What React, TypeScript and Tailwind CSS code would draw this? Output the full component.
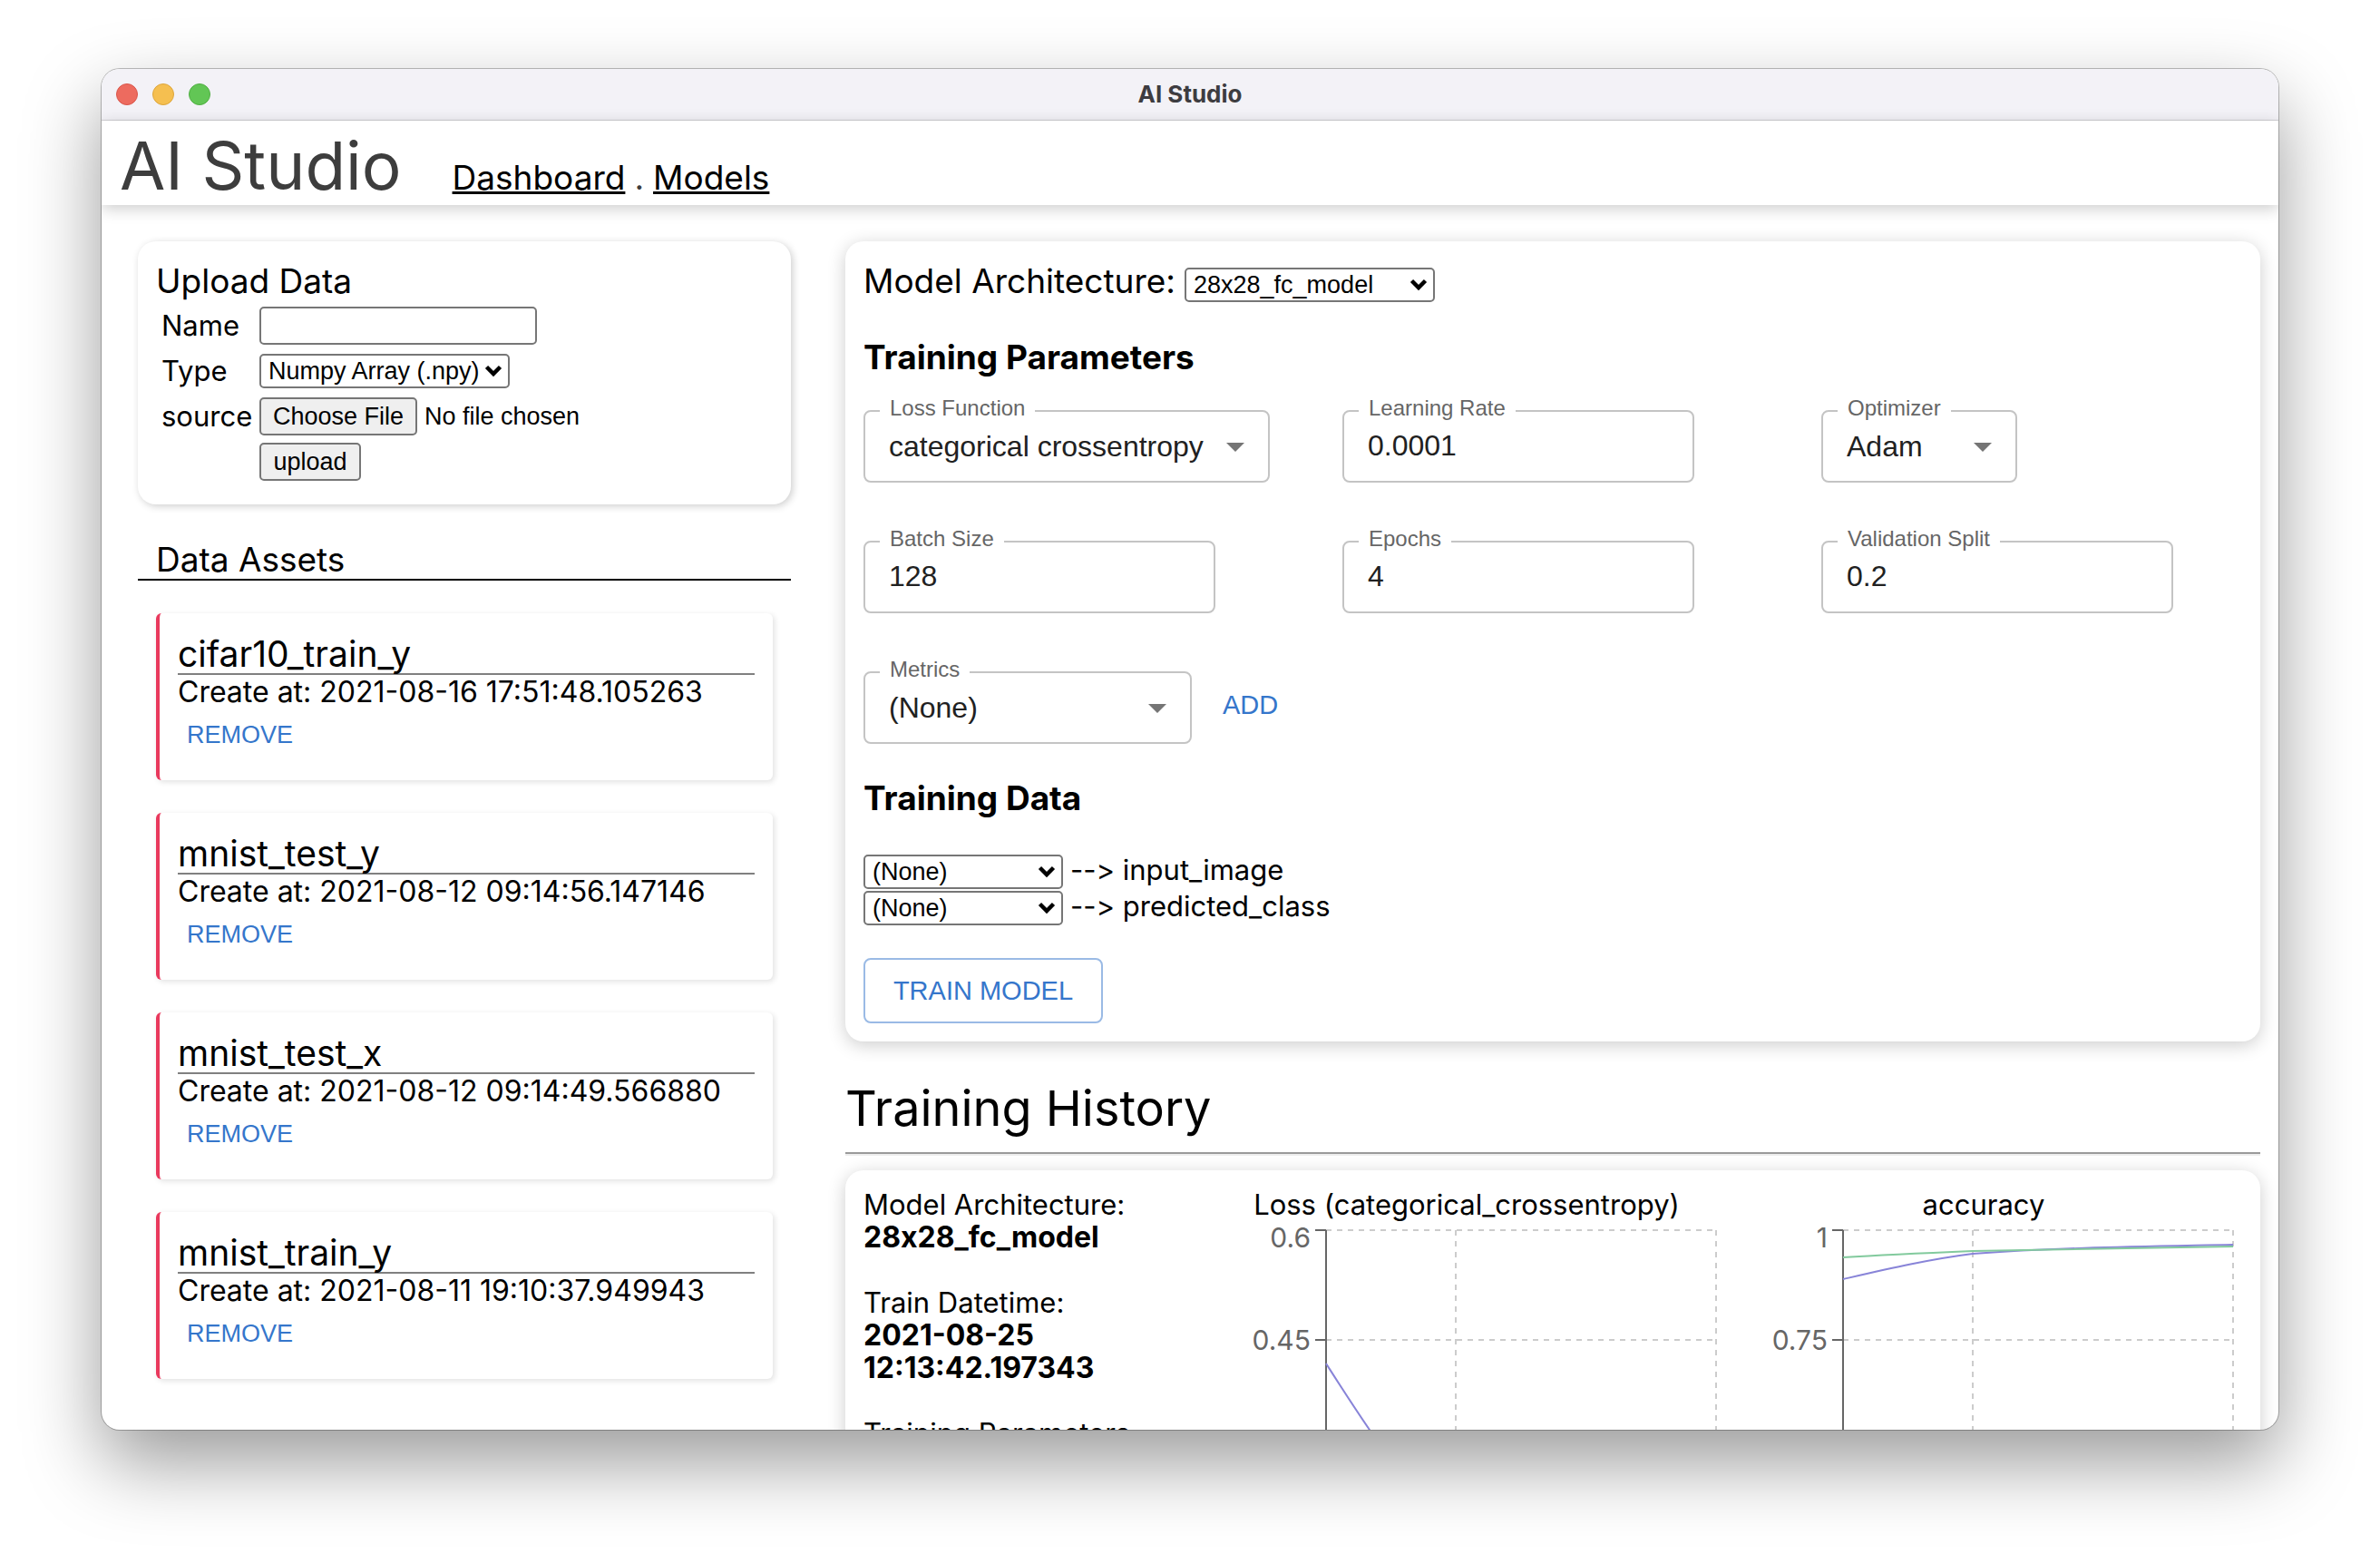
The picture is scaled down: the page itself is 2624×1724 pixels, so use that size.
import React from "react";

type Option = { id: string; label: string; value: string };

const assets = [
  { name: "cifar10_train_y", created: "2021-08-16 17:51:48.105263" },
  { name: "mnist_test_y", created: "2021-08-12 09:14:56.147146" },
  { name: "mnist_test_x", created: "2021-08-12 09:14:49.566880" },
  { name: "mnist_train_y", created: "2021-08-11 19:10:37.949943" },
];

const targets = ["input_image", "predicted_class"];

function PlainSelect({ id, value, className }: { id: string; value: string; className?: string }) {
  return (
    <span className={"relative inline-flex h-[38px] " + (className ?? "")}>
      <select
        id={id}
        defaultValue={value}
        className="h-full w-full appearance-none rounded-[5px] border-2 border-[#767676] bg-white pl-2 pr-8 font-['Liberation_Sans',sans-serif] text-[27px] leading-8 text-black"
      >
        <option>{value}</option>
      </select>
      <svg viewBox="0 0 20 14" className="pointer-events-none absolute right-2 top-3 h-3.5 w-5" aria-hidden="true">
        <path d="M2.5 2.5 L10 10 L17.5 2.5" fill="none" stroke="#000" strokeWidth="4.5" />
      </svg>
    </span>
  );
}

function Outlined({ id, label, children, className }: { id: string; label: string; children: React.ReactNode; className?: string }) {
  return (
    <fieldset
      className={
        "relative h-[94px] rounded-lg border-2 border-[#c4c4c4] pl-4 pr-3 font-['Liberation_Sans',sans-serif] " + (className ?? "")
      }
    >
      <legend className="px-[11px] pb-1.5 text-2xl leading-6 text-[#666666]">
        <label htmlFor={id}>{label}</label>
      </legend>
      {children}
    </fieldset>
  );
}

function OutlinedInput({ id, label, value }: Option) {
  return (
    <Outlined id={id} label={label} className="w-[388px]">
      <input
        id={id}
        defaultValue={value}
        className="block h-[46px] w-full bg-transparent pl-2.5 text-[32px] text-[#212121] outline-none"
      />
    </Outlined>
  );
}

function OutlinedSelect({ id, label, value, className }: Option & { className: string }) {
  return (
    <Outlined id={id} label={label} className={className}>
      <select
        id={id}
        defaultValue={value}
        className="block h-[46px] w-full appearance-none bg-transparent pl-2.5 text-[32px] text-[#212121] outline-none"
      >
        <option>{value}</option>
      </select>
      <svg viewBox="0 0 20 10" className="pointer-events-none absolute bottom-8 right-[26px] h-2.5 w-5" aria-hidden="true">
        <path d="M0 0 H20 L10 10 Z" fill="#757575" />
      </svg>
    </Outlined>
  );
}

type ChartProps = { title: string; ticks: [string, string]; blue: string; green?: string };

function Chart({ title, ticks, blue, green }: ChartProps) {
  return (
    <figure>
      <figcaption className="text-center text-[31px] leading-9">{title}</figcaption>
      <svg viewBox="0 0 570 400" className="block w-full font-['Inter',sans-serif]" role="img" aria-label={title}>
        <g stroke="#ccc" strokeWidth="2" strokeDasharray="6 6">
          <path d="M130 10 H560" />
          <path d="M130 131 H560" />
          <path d="M130 252 H560" />
          <path d="M273 10 V400" />
          <path d="M560 10 V400" />
        </g>
        <path d="M130 10 V400 M118 10 H130 M118 131 H130" fill="none" stroke="#666" strokeWidth="2" />
        <g fill="#666" fontSize="30" textAnchor="end">
          <text x="113" y="29">{ticks[0]}</text>
          <text x="113" y="142">{ticks[1]}</text>
        </g>
        <path d={blue} fill="none" stroke="#8884d8" strokeWidth="2" />
        {green && <path d={green} fill="none" stroke="#82ca9d" strokeWidth="2" />}
      </svg>
    </figure>
  );
}

export default function App() {
  return (
    <div className="flex h-screen flex-col overflow-hidden bg-white px-28 pb-[148px] pt-[76px] font-['Inter',sans-serif] text-black">
      <div className="flex min-h-0 flex-1 flex-col overflow-hidden rounded-[20px] bg-white shadow-[0_0_0_1px_rgba(0,0,0,0.25),0_36px_84px_rgba(0,0,0,0.4)]">
        <div className="grid h-[57px] shrink-0 grid-cols-[1fr_auto_1fr] items-center border-b border-[#d2d1d5] bg-[#f3f2f7] px-4">
          <div className="flex gap-4">
            <span className="size-6 rounded-full border border-[#d9564b] bg-[#ed6b5f]" />
            <span className="size-6 rounded-full border border-[#dca53c] bg-[#f5bf50]" />
            <span className="size-6 rounded-full border border-[#50ae42] bg-[#62c655]" />
          </div>
          <span className="text-[26px] font-bold leading-8 text-[#3d3c40]">AI Studio</span>
        </div>

        <header className="relative flex h-[93px] shrink-0 items-baseline gap-14 px-5 text-[#3d3d3d] shadow-[0_4px_16px_rgba(0,0,0,0.2)]">
          <h1 className="text-[73px] leading-[100px]">AI Studio</h1>
          <nav className="flex gap-2.5 text-[37px]">
            <a href="#dashboard" className="text-black underline">Dashboard</a>
            <span>.</span>
            <a href="#models" className="text-black underline">Models</a>
          </nav>
        </header>

        <main className="grid min-h-0 flex-1 grid-cols-[6fr_13fr] items-start gap-[60px] overflow-hidden pl-10 pr-5 pt-10">
          <div className="min-w-0">
            <section className="rounded-[20px] px-5 pb-[26px] pt-5 shadow-[2px_2px_8px_rgba(0,0,0,0.2)]">
              <h2 className="text-[37px] leading-[48px]">Upload Data</h2>
              <form className="mt-1 grid auto-rows-[42px] grid-cols-[108px_1fr] items-center gap-y-2 pl-1.5 text-[31px]">
                <label htmlFor="name">Name</label>
                <input id="name" className="h-[42px] w-[306px] rounded-[5px] border-2 border-[#767676] bg-white px-2 text-[27px]" />
                <label htmlFor="type">Type</label>
                <PlainSelect id="type" value="Numpy Array (.npy)" className="w-[276px]" />
                <label htmlFor="source">source</label>
                <input
                  id="source"
                  type="file"
                  className="font-['Liberation_Sans',sans-serif] text-[27px] leading-8 file:mr-2 file:h-[42px] file:w-[174px] file:rounded-[5px] file:border-2 file:border-solid file:border-[#767676] file:bg-[#efefef]"
                />
                <button
                  type="button"
                  className="col-start-2 h-[42px] w-28 rounded-[5px] border-2 border-[#767676] bg-[#efefef] font-['Liberation_Sans',sans-serif] text-[27px] leading-8"
                >
                  upload
                </button>
              </form>
            </section>

            <h2 className="mt-10 border-b-2 border-black px-5 text-[37px] leading-[42px]">Data Assets</h2>
            <div className="mx-5 mt-9 flex flex-col gap-9">
              {assets.map((a) => (
                <article key={a.name} className="rounded-md border-l-4 border-[#e9395d] px-5 pb-[22px] pt-6 shadow-[2px_2px_6px_rgba(0,0,0,0.12)]">
                  <h3 className="border-b-2 border-[#808080] text-[39px] leading-[42px]">{a.name}</h3>
                  <p className="text-[32px] leading-[38px]">Create at: {a.created}</p>
                  <button type="button" className="h-14 px-2.5 font-['Liberation_Sans',sans-serif] text-[27px] leading-8 text-[#3576cb]">
                    REMOVE
                  </button>
                </article>
              ))}
            </div>
          </div>

          <div className="min-w-0">
            <section className="rounded-[20px] p-5 shadow-[0_4px_20px_rgba(0,0,0,0.2)]">
              <div className="flex items-center gap-2.5">
                <label htmlFor="arch" className="text-[37px] leading-[48px]">Model Architecture:</label>
                <PlainSelect id="arch" value="28x28_fc_model" className="mt-2 w-[276px]" />
              </div>
              <h3 className="mt-9 text-[37px] font-bold leading-[48px]">Training Parameters</h3>
              <div className="mt-5 grid grid-cols-3 gap-x-16 gap-y-[50px]">
                <OutlinedSelect id="loss" label="Loss Function" value="categorical crossentropy" className="w-[448px]" />
                <OutlinedInput id="rate" label="Learning Rate" value="0.0001" />
                <OutlinedSelect id="optimizer" label="Optimizer" value="Adam" className="w-[216px]" />
                <OutlinedInput id="batch" label="Batch Size" value="128" />
                <OutlinedInput id="epochs" label="Epochs" value="4" />
                <OutlinedInput id="split" label="Validation Split" value="0.2" />
                <div className="flex items-center gap-[34px]">
                  <OutlinedSelect id="metrics" label="Metrics" value="(None)" className="w-[362px]" />
                  <button type="button" className="pt-2 font-['Liberation_Sans',sans-serif] text-[29px] leading-8 text-[#3576cb]">ADD</button>
                </div>
              </div>
              <h3 className="mt-9 text-[37px] font-bold leading-[48px]">Training Data</h3>
              <div className="mt-[38px] flex flex-col gap-0.5">
                {targets.map((t) => (
                  <div key={t} className="flex items-start gap-2">
                    <PlainSelect id={t} value="(None)" className="w-[220px]" />
                    <label htmlFor={t} className="text-[31px] leading-[34px] [font-variant-ligatures:none]">{"--> " + t}</label>
                  </div>
                ))}
              </div>
              <button
                type="button"
                className="mt-9 block h-[72px] w-[264px] rounded-lg border-2 border-[#9abae5] font-['Liberation_Sans',sans-serif] text-[29px] leading-8 text-[#3576cb]"
              >
                TRAIN MODEL
              </button>
            </section>

            <h2 className="mt-[38px] pb-3 text-[54px] leading-[72px]">Training History</h2>
            <hr className="h-1 border-b-2 border-t-2 border-b-[#eeeeee] border-t-[#9a9a9a]" />

            <section className="mt-4 grid grid-cols-[25%_minmax(0,1fr)_minmax(0,1fr)] rounded-[20px] p-5 shadow-[0_4px_20px_rgba(0,0,0,0.2)]">
              <dl className="pr-20 text-[31px] leading-9">
                <dt>Model Architecture:</dt>
                <dd className="mb-9 text-[32px] font-bold leading-9 [font-variant-ligatures:none]">28x28_fc_model</dd>
                <dt>Train Datetime:</dt>
                <dd className="mb-9 text-[32px] font-bold leading-9">2021-08-25 12:13:42.197343</dd>
                <dt>Training Parameters</dt>
              </dl>
              <Chart
                title="Loss (categorical_crossentropy)"
                ticks={["0.6", "0.45"]}
                blue="M130 157 C178 232 225 307 273 330 C368 360 464 370 560 378"
              />
              <Chart
                title="accuracy"
                ticks={["1", "0.75"]}
                blue="M130 64 C178 53 225 42 273 36 C368 29 464 28 560 26"
                green="M130 40 C178 37 225 35 273 33 C368 31 464 30 560 28"
              />
            </section>
          </div>
        </main>
      </div>
    </div>
  );
}
